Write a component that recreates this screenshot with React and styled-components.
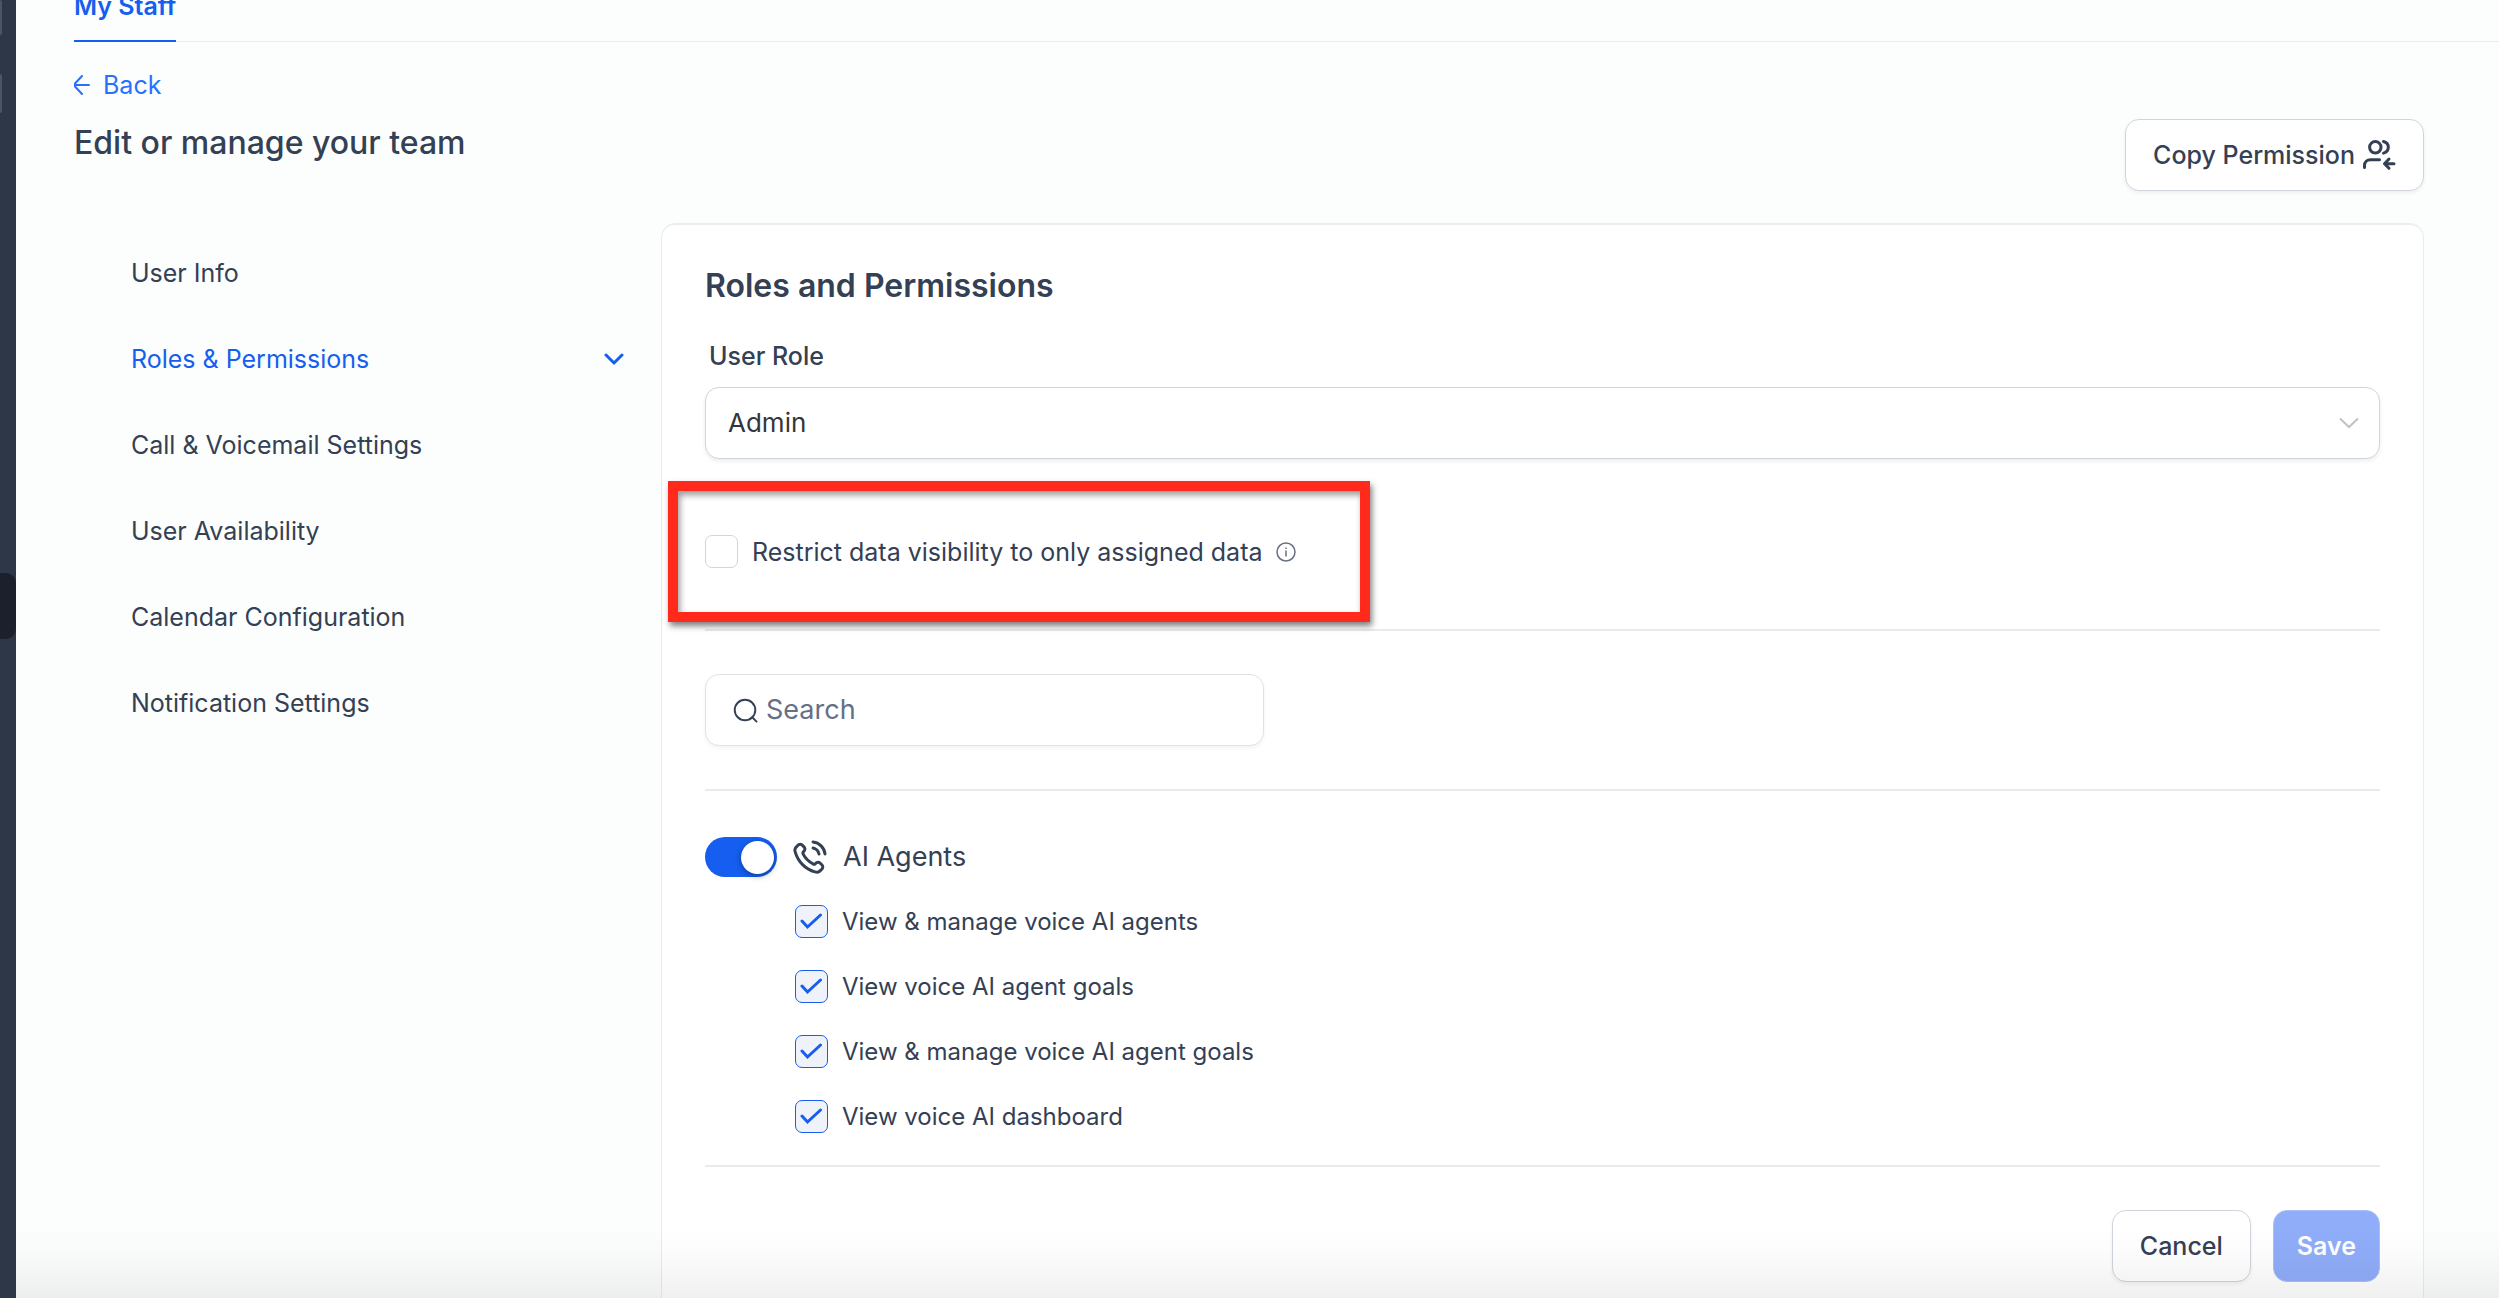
import React from "react";
import styled, { createGlobalStyle, css } from "styled-components";

const color = {
  page: "#fcfefd",
  panel: "#ffffff",
  rail: "#2d3748",
  railActive: "#1b202c",
  railChip: "#4b5565",
  text: "#344054",
  control: "#333639",
  muted: "#667085",
  primary: "#155eef",
  line: "#eaecee",
  border: "#d0d5dd",
  highlight: "#ff2a1b",
};

const GlobalStyle = createGlobalStyle`
  *, *::before, *::after { box-sizing: border-box; }
  body {
    margin: 0;
    background: ${color.page};
    color: ${color.text};
    font-family: Inter, "Liberation Sans", sans-serif;
    font-size: 25px;
    line-height: 32px;
  }
  button, input, select { font: inherit; color: inherit; margin: 0; }
  h1, h2 { margin: 0; }
`;

const Shell = styled.div`
  display: flex;
  height: 100vh;
  overflow: hidden;
`;

const Rail = styled.aside`
  flex: none;
  display: flex;
  flex-direction: column;
  width: 16px;
  background: ${color.rail};
`;

const RailChip = styled.span`
  width: 2px;
  height: ${(p) => p.$height}px;
  margin-bottom: 39px;
  border-radius: 0 2px 2px 0;
  background: ${color.railChip};
`;

const RailActive = styled.span`
  height: 66px;
  margin-top: 421px;
  border-radius: 0 10px 10px 0;
  background: ${color.railActive};
`;

const Main = styled.main`
  flex: 1;
  min-width: 0;
  padding-left: 58px;
`;

const Tabs = styled.nav`
  display: flex;
  margin-top: -10px;
  box-shadow: inset 0 -1px 0 ${color.line};
`;

const Tab = styled.a`
  padding-bottom: 18px;
  border-bottom: 2px solid ${color.primary};
  color: ${color.primary};
  font-weight: 600;
  text-decoration: none;
`;

const Content = styled.div`
  padding: 27px 75px 0 0;
`;

const BackLink = styled.a`
  display: flex;
  align-items: center;
  gap: 12px;
  width: fit-content;
  color: #2970ff;
  text-decoration: none;
`;

const Header = styled.header`
  display: flex;
  justify-content: space-between;
  align-items: flex-start;
  margin: 18px 0 32px;
`;

const Title = styled.h1`
  padding-top: 4px;
  font-size: 32px;
  font-weight: 500;
  line-height: 40px;
`;

const Button = styled.button`
  display: inline-flex;
  align-items: center;
  gap: 7px;
  height: 72px;
  padding: 0 27px;
  border: 1px solid ${color.border};
  border-radius: 14px;
  background: ${color.panel};
  box-shadow: 0 2px 4px rgba(16, 24, 40, 0.06);
  font-weight: 500;
  ${(p) =>
    p.$primary &&
    css`
      padding: 0 23px;
      border-color: #a9c0fa;
      background: #90adf9;
      color: #ffffff;
      font-weight: 600;
      box-shadow: none;
    `}
`;

const Columns = styled.div`
  display: flex;
  align-items: flex-start;
`;

const SideNav = styled.nav`
  flex: none;
  width: 587px;
  padding: 7px 37px 0 57px;
`;

const SideLink = styled.a`
  display: flex;
  align-items: center;
  justify-content: space-between;
  height: 86px;
  color: ${(p) => (p.$active ? color.primary : color.text)};
  text-decoration: none;
`;

const Card = styled.section`
  flex: 1;
  min-width: 0;
  padding: 42px 43px 60px;
  border: 1px solid ${color.line};
  border-radius: 14px;
  background: ${color.panel};
  box-shadow: inset 0 1px 0 ${color.line};
`;

const CardTitle = styled.h2`
  font-size: 32px;
  font-weight: 600;
  line-height: 40px;
`;

const FieldLabel = styled.label`
  display: block;
  margin: 34px 0 15px;
  padding-left: 4px;
  font-weight: 500;
`;

const SelectBox = styled.div`
  display: grid;
  align-items: center;
  > * { grid-area: 1 / 1; }
  > svg { justify-self: end; margin-right: 20px; pointer-events: none; }
`;

const Select = styled.select`
  appearance: none;
  height: 72px;
  padding: 0 60px 0 22px;
  border: 1px solid ${color.border};
  border-radius: 14px;
  background: ${color.panel};
  box-shadow: 0 2px 4px rgba(16, 24, 40, 0.08);
  color: ${color.control};
  font-size: 26px;
`;

const RestrictArea = styled.div`
  position: relative;
  padding: 76px 0 61px;
`;

const Highlight = styled.div`
  position: absolute;
  top: 22px;
  left: -37px;
  width: 702px;
  height: 141px;
  border: 10px solid ${color.highlight};
  box-shadow: 2px 4px 6px rgba(0, 0, 0, 0.5), inset 2px 4px 6px rgba(0, 0, 0, 0.4);
  pointer-events: none;
`;

const CheckLabel = styled.label`
  display: flex;
  align-items: center;
  gap: 14px;
  height: 33px;
`;

const InfoSlot = styled.span`
  display: flex;
`;

const CheckBox = styled.span`
  display: grid;
  place-items: center;
  flex: none;
  width: 33px;
  height: 33px;
  > * { grid-area: 1 / 1; }
  > svg { visibility: hidden; pointer-events: none; }
  > input:checked + svg { visibility: visible; }
`;

const CheckInput = styled.input`
  appearance: none;
  width: 100%;
  height: 100%;
  border: 1px solid ${color.border};
  border-radius: 7px;
  background: ${color.panel};
  &:checked {
    border-color: ${color.primary};
    background: #eff2f8;
  }
`;

const Divider = styled.hr`
  height: 2px;
  margin: 0;
  border: 0;
  background: #ebebec;
`;

const SearchBox = styled.label`
  display: flex;
  align-items: center;
  gap: 8px;
  width: 559px;
  height: 72px;
  margin: 43px 0;
  padding: 0 27px;
  border: 1px solid #e0e2e6;
  border-radius: 14px;
  background: ${color.panel};
  box-shadow: 0 2px 4px rgba(16, 24, 40, 0.05);
`;

const SearchInput = styled.input`
  flex: 1;
  min-width: 0;
  padding: 0;
  border: 0;
  outline: 0;
  background: transparent;
  font-size: 27px;
  &::placeholder { color: ${color.muted}; opacity: 1; }
`;

const GroupHead = styled.label`
  display: flex;
  align-items: center;
  gap: 15px;
  height: 40px;
  margin: 46px 0 28px;
  font-size: 27px;
`;

const Toggle = styled.input`
  appearance: none;
  display: flex;
  align-items: center;
  justify-content: flex-end;
  width: 72px;
  height: 40px;
  padding: 0 3px;
  border-radius: 20px;
  background: ${color.primary};
  &::before {
    content: "";
    width: 33px;
    height: 33px;
    border-radius: 50%;
    background: #ffffff;
    box-shadow: 0 2px 6px rgba(0, 0, 0, 0.35);
  }
  &:not(:checked) {
    justify-content: flex-start;
    background: #d0d5dd;
  }
`;

const PermissionList = styled.div`
  display: flex;
  flex-direction: column;
  align-items: flex-start;
  gap: 32px;
  padding: 0 0 32px 90px;
  font-size: 24px;
`;

const Actions = styled.footer`
  display: flex;
  justify-content: flex-end;
  gap: 22px;
  margin-top: 43px;
`;

const BottomFade = styled.div`
  position: fixed;
  inset: auto 0 0 16px;
  height: 70px;
  background: linear-gradient(to bottom, rgba(0, 0, 0, 0), rgba(0, 0, 0, 0.015) 40%, rgba(0, 0, 0, 0.06));
  pointer-events: none;
`;

function Icon({ width, height = width, box, stroke = 2, children }) {
  return (
    <svg
      width={width}
      height={height}
      viewBox={box || `0 0 ${width} ${height}`}
      fill="none"
      stroke="currentColor"
      strokeWidth={stroke}
      strokeLinecap="round"
      strokeLinejoin="round"
      aria-hidden="true"
    >
      {children}
    </svg>
  );
}

const ArrowLeftIcon = () => (
  <Icon width={17} height={20}>
    <path d="M15 10H1M8 1L1 8.500V11.500L8 19" />
  </Icon>
);

const ChevronIcon = () => (
  <Icon width={20} height={12} stroke={3}>
    <path d="M2 2l8 8 8-8" />
  </Icon>
);

const SelectChevronIcon = () => (
  <svg width="22" height="12" viewBox="0 0 22 12" fill="none" stroke="#c2c2c2" strokeWidth="2" aria-hidden="true">
    <path d="M2 1.500l9 8.500 9-8.500" />
  </svg>
);

const CopyUsersIcon = () => (
  <Icon width={34} height={32} stroke={3}>
    <circle cx="13.300" cy="8.300" r="5.700" />
    <path d="M21.500 2.500C24.500 3.300 26.300 5.600 26.300 8.300S24.500 13.300 21.500 14.100" />
    <path d="M2.500 28.500V26.500C2.500 23 5 20.700 8.500 20.700H17.500" />
    <path d="M32 24.700H22.500M27 20L22.500 24.700L27 29.300" />
  </Icon>
);

const InfoIcon = () => (
  <svg width="20" height="20" viewBox="0 0 20 20" fill="none" stroke="#667085" strokeWidth="1.500" aria-hidden="true">
    <circle cx="10" cy="10" r="9" />
    <path d="M10 8.500V14.500M10 5.500V7" />
  </svg>
);

const SearchIcon = () => (
  <Icon width={25} box="0 0 26 26" stroke={2}>
    <circle cx="12.500" cy="12.500" r="10.700" />
    <path d="M20 20l4.500 4.500" />
  </Icon>
);

const CheckIcon = () => (
  <svg width="23" height="17" viewBox="0 0 23 17" fill="none" stroke="#155eef" strokeWidth="3" strokeLinecap="round" aria-hidden="true">
    <path d="M2 8l5.500 6L20.500 2" />
  </svg>
);

const PhoneIcon = () => (
  <Icon width={36} box="0 0 24 24">
    <path d="M14.050 6C15.027 6.191 15.924 6.668 16.628 7.372C17.332 8.076 17.810 8.973 18 9.950M14.050 2C16.079 2.225 17.972 3.134 19.416 4.577C20.861 6.020 21.772 7.911 22 9.940M10.227 13.863C9.025 12.662 8.076 11.303 7.380 9.853C7.320 9.729 7.290 9.666 7.267 9.587C7.186 9.307 7.244 8.963 7.414 8.725C7.462 8.658 7.519 8.601 7.634 8.487C7.983 8.137 8.158 7.963 8.272 7.787C8.703 7.124 8.703 6.269 8.272 5.606C8.158 5.431 7.983 5.256 7.634 4.906L7.439 4.711C6.907 4.180 6.642 3.914 6.356 3.770C5.789 3.483 5.119 3.483 4.551 3.770C4.266 3.914 4 4.180 3.468 4.711L3.311 4.869C2.781 5.399 2.516 5.663 2.314 6.023C2.090 6.423 1.928 7.043 1.930 7.502C1.931 7.915 2.011 8.197 2.171 8.761C3.032 11.795 4.657 14.657 7.045 17.045C9.433 19.433 12.295 21.058 15.328 21.919C15.893 22.079 16.175 22.159 16.588 22.160C17.046 22.161 17.667 22 18.066 21.776C18.426 21.573 18.691 21.309 19.221 20.779L19.378 20.621C19.910 20.090 20.176 19.824 20.320 19.539C20.607 18.971 20.607 18.301 20.320 17.733C20.176 17.448 19.910 17.182 19.378 16.651L19.184 16.456C18.834 16.106 18.659 15.932 18.483 15.817C17.820 15.386 16.966 15.386 16.303 15.817C16.127 15.932 15.952 16.106 15.603 16.456C15.488 16.570 15.431 16.627 15.364 16.675C15.127 16.845 14.783 16.904 14.502 16.822C14.424 16.799 14.361 16.769 14.237 16.709C12.787 16.013 11.428 15.065 10.227 13.863Z" />
  </Icon>
);

const navItems = [
  "User Info",
  "Roles & Permissions",
  "Call & Voicemail Settings",
  "User Availability",
  "Calendar Configuration",
  "Notification Settings",
];

const permissions = [
  "View & manage voice AI agents",
  "View voice AI agent goals",
  "View & manage voice AI agent goals",
  "View voice AI dashboard",
];

function CheckRow({ label, checked, children }) {
  return (
    <CheckLabel>
      <CheckBox>
        <CheckInput type="checkbox" defaultChecked={checked} />
        <CheckIcon />
      </CheckBox>
      {label}
      {children}
    </CheckLabel>
  );
}

export default function App() {
  return (
    <>
      <GlobalStyle />
      <Shell>
        <Rail>
          <RailChip $height={35} />
          <RailChip $height={39} />
          <RailActive />
        </Rail>
        <Main>
          <Tabs>
            <Tab href="#staff">My Staff</Tab>
          </Tabs>
          <Content>
            <BackLink href="#back">
              <ArrowLeftIcon />
              Back
            </BackLink>
            <Header>
              <Title>Edit or manage your team</Title>
              <Button type="button">
                Copy Permission
                <CopyUsersIcon />
              </Button>
            </Header>
            <Columns>
              <SideNav>
                {navItems.map((item, i) => (
                  <SideLink key={item} href={`#section-${i}`} $active={i === 1}>
                    {item}
                    {i === 1 && <ChevronIcon />}
                  </SideLink>
                ))}
              </SideNav>
              <Card>
                <CardTitle>Roles and Permissions</CardTitle>
                <FieldLabel htmlFor="role">User Role</FieldLabel>
                <SelectBox>
                  <Select id="role" defaultValue="Admin">
                    <option>Admin</option>
                  </Select>
                  <SelectChevronIcon />
                </SelectBox>
                <RestrictArea>
                  <CheckRow label="Restrict data visibility to only assigned data">
                    <InfoSlot>
                      <InfoIcon />
                    </InfoSlot>
                  </CheckRow>
                  <Highlight />
                </RestrictArea>
                <Divider />
                <SearchBox>
                  <SearchIcon />
                  <SearchInput type="search" placeholder="Search" aria-label="Search" />
                </SearchBox>
                <Divider />
                <GroupHead>
                  <Toggle type="checkbox" role="switch" defaultChecked />
                  <PhoneIcon />
                  AI Agents
                </GroupHead>
                <PermissionList>
                  {permissions.map((p) => (
                    <CheckRow key={p} label={p} checked />
                  ))}
                </PermissionList>
                <Divider />
                <Actions>
                  <Button type="button">Cancel</Button>
                  <Button type="submit" $primary>
                    Save
                  </Button>
                </Actions>
              </Card>
            </Columns>
          </Content>
        </Main>
      </Shell>
      <BottomFade />
    </>
  );
}
